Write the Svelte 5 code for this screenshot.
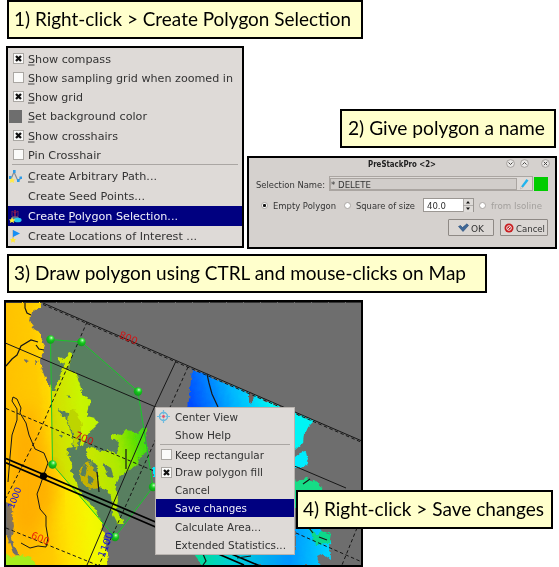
<script>
  const viewMenu = [
    { text: 'Show compass', w: 83, u: 0, icon: 'on', h: 19 },
    { text: 'Show sampling grid when zoomed in', w: 205, u: 0, icon: 'off', h: 19 },
    { text: 'Show grid', w: 55, u: 0, icon: 'on', h: 19 },
    { text: 'Set background color', w: 119, u: 0, icon: 'swatch', h: 20 },
    { text: 'Show crosshairs', w: 90, u: 0, icon: 'on', h: 19 },
    { text: 'Pin Crosshair', w: 73, u: -1, icon: 'off', h: 19 },
    { sep: true },
    { text: 'Create Arbitrary Path...', w: 129, u: 0, icon: 'path', h: 20 },
    { text: 'Create Seed Points...', w: 117, u: -1, icon: '', h: 20 },
    { text: 'Create Polygon Selection...', w: 150, u: 7, icon: 'polygon', h: 20, active: true },
    { text: 'Create Locations of Interest ...', w: 169, u: -1, icon: 'flag', h: 20 }
  ];
  const mapMenu = [
    { text: 'Center View', w: 63, icon: 'target', h: 19 },
    { text: 'Show Help', w: 56, icon: '', h: 18 },
    { sep: true },
    { text: 'Keep rectangular', w: 89, icon: 'off', h: 17 },
    { text: 'Draw polygon fill', w: 88, icon: 'on', h: 18 },
    { text: 'Cancel', w: 35, icon: '', h: 18 },
    { text: 'Save changes', w: 72, icon: '', h: 18, active: true },
    { text: 'Calculate Area...', w: 86, icon: '', h: 19 },
    { text: 'Extended Statistics...', w: 111, icon: '', h: 17 }
  ];
  const nodes = [[50.5, 339.5], [81.5, 342], [138, 391.5], [153, 487], [115, 537], [52.5, 464.5]];
  const outline = nodes.map((p) => p.join(',')).join(' ');
</script>

{#snippet label(text, w, size = 11.2, u = -1)}
  <svg class="label" width={w} height="16" viewBox="0 0 {w} 16">
    <text y="12" font-size={size} textLength={w} lengthAdjust="spacingAndGlyphs">{text}</text>
    {#if u >= 0}<path d="M{u === 7 ? 41 : 0} 14h6.5" stroke="currentColor" stroke-width=".9" />{/if}
  </svg>
{/snippet}

{#snippet caption(text, w)}
  <svg class="caption-text" width={w} height="30" viewBox="0 0 {w} 30">
    <text y="22" font-size="18.6" textLength={w} lengthAdjust="spacingAndGlyphs">{text}</text>
  </svg>
{/snippet}

{#snippet icon(name)}
  <span class="icon">
    {#if name === 'on' || name === 'off'}
      <svg class="check" width="11" height="11" viewBox="0 0 11 11">
        <rect x=".5" y=".5" width="10" height="10" fill="#fbfbfa" stroke="#aaa7a3" />
        {#if name === 'on'}<path d="M3 3l5 5M8 3l-5 5" stroke="#111" stroke-width="2.3" />{/if}
      </svg>
    {:else if name === 'swatch'}
      <svg width="13" height="13" viewBox="0 0 13 13"><path d="M0 0h13v13H0z" fill="#6e6e6e" /></svg>
    {:else if name === 'path'}
      <svg width="13" height="13" viewBox="0 0 13 13">
        <path d="M2 9L5 2l4 9 3-3" fill="none" stroke="#888d91" stroke-width="1.2" />
        <path d="M4 0h2.6v3H4zM0 6h2.5v3H0zM8 9h2.6v3H8zM10.5 6.500H13V9h-2.500z" fill="#2d9be8" />
        <path d="M3 7l1 2.200 2.500.2-1.900 1.600.6 2-2.200-1-2.200 1 .6-2L0 9.400l2.200-.2z" fill="#ffe94a" />
      </svg>
    {:else if name === 'polygon'}
      <svg width="13" height="13" viewBox="0 0 13 13">
        <path d="M3 1l3 2 3-2v5L6 8 3 6z" fill="none" stroke="#702060" />
        <path d="M6 0v9" stroke="#b01944" stroke-width="1.300" /><path d="M2 8q2-3 8-1l-2 3H3z" fill="#5d6f93" />
        <ellipse cx="8.700" cy="10" rx="3.900" ry="2.300" fill="#24c8ee" />
        <path d="M3 7l1 2.200 2.500.2-1.900 1.600.6 2-2.200-1-2.200 1 .6-2L0 9.400l2.200-.2z" fill="#ffef35" />
      </svg>
    {:else if name === 'flag'}
      <svg width="13" height="13" viewBox="0 0 13 13">
        <path d="M4 0v10" stroke="#a8a8a8" /><path d="M4 0l7 3.500L4 7z" fill="#168ff4" />
        <path d="M4 7l1 2 2.200.2-1.700 1.500.5 2L4 11.600l-2 1.100.5-2L.8 9.200 3 9z" fill="#ffe936" />
      </svg>
    {:else if name === 'target'}
      <svg width="13" height="13" viewBox="0 0 13 13" fill="none">
        <circle cx="6.500" cy="6.500" r="4" stroke="#64b6dc" stroke-width="1.400" />
        <path d="M6.500 0v4.500M6.500 8.500V13M0 6.500h4.500M8.500 6.500H13" stroke="#6ebce0" stroke-width="1.200" />
        <circle cx="6.500" cy="6.500" r="1.400" fill="#e0506a" />
      </svg>
    {/if}
  </span>
{/snippet}

{#snippet menu(items)}
  {#each items as item}
    {#if item.sep}
      <hr />
    {:else}
      <div class="item" class:active={item.active} style="height:{item.h}px">
        {@render icon(item.icon)}
        {@render label(item.text, item.w, 11.2, item.u)}
      </div>
    {/if}
  {/each}
{/snippet}

{#snippet bubble(d)}
  <svg width="9" height="9" viewBox="0 0 9 9" fill="none">
    <circle cx="4.500" cy="4.500" r="3.900" fill="#e9e7e5" stroke="#97928f" stroke-width=".8" />
    <path {d} stroke="#494644" />
  </svg>
{/snippet}

<main>
  <div class="caption c1">{@render caption('1) Right-click > Create Polygon Selection', 337)}</div>
  <section class="row">
    <div class="menu view">{@render menu(viewMenu)}</div>
    <div class="right">
      <div class="caption c2">{@render caption('2) Give polygon a name', 197)}</div>
      <div class="dialog">
        <header>
          <b>{@render label('PreStackPro <2>', 68, 8.5)}</b>
          <span class="controls">
            {@render bubble('M2.500 3.500l2 2 2-2')}
            {@render bubble('M2.500 5.500l2-2 2 2')}
            {@render bubble('M2.800 2.800l3.400 3.400M6.200 2.800L2.800 6.200')}
          </span>
        </header>
        <div class="name">
          {@render label('Selection Name:', 69, 9)}
          <div class="field"><div class="value">{@render label('* DELETE', 40, 9)}</div>
            <svg width="15" height="13" viewBox="0 0 15 13">
              <path d="M4 9.500L9.500 2l2 1.600L6 10.500z" fill="#20b4ee" /><path d="M4 9.500L3.500 12 6 10.500z" fill="#eee" stroke="#777" stroke-width=".3" />
            </svg>
          </div>
          <i class="green"></i>
        </div>
        <div class="options">
          <i class="radio sel"></i>{@render label('Empty Polygon', 63, 9)}
          <i class="radio second"></i>{@render label('Square of size', 59, 9)}
          <div class="spin">{@render label('40.0', 19, 9)}
            <svg width="10" height="13" viewBox="0 0 10 13"><path d="M0 0h10v13H0z" fill="#dedbd8" /><path d="M0 6.500h10M.5 0v13" stroke="#a5a19e" stroke-width=".8" /><path d="M3 4.500l2-2.500 2 2.500zM3 8.500l2 2.500 2-2.500z" fill="#111" /></svg>
          </div>
          <i class="radio third"></i><span class="muted">{@render label('from Isoline', 51, 9)}</span>
        </div>
        <footer>
          <button class="ok"><svg width="11" height="9" viewBox="0 0 11 9"><path d="M.5 3.500l2-1 2 2L9 .8l1.500 1.700L5 8.500z" fill="#3f6797" stroke="#244c79" stroke-width=".6" /></svg>{@render label('OK', 13, 9)}</button>
          <button class="cancel"><svg width="10" height="10" viewBox="0 0 10 10"><circle cx="5" cy="5" r="4.500" fill="#c91d20" /><circle cx="5" cy="5" r="2.300" fill="none" stroke="#eee" /><path d="M3.500 6.500l3-3" stroke="#eee" /></svg>{@render label('Cancel', 29, 9)}</button>
        </footer>
      </div>
    </div>
  </section>
  <div class="caption c3">{@render caption('3) Draw polygon using CTRL and mouse-clicks on Map', 452)}</div>

  <section class="map">
    <svg class="chart" width="355" height="263" viewBox="6 302 355 263">
      <defs>
        <linearGradient id="warm" gradientUnits="userSpaceOnUse" x1="6" y1="400" x2="98" y2="392">
          <stop offset="0" stop-color="#ffc000" /><stop offset=".35" stop-color="#ffca00" /><stop offset=".55" stop-color="#ffe400" /><stop offset=".8" stop-color="#f4f800" /><stop offset="1" stop-color="#e6f800" />
        </linearGradient>
        <linearGradient id="isle" gradientUnits="userSpaceOnUse" x1="90" y1="460" x2="143" y2="450">
          <stop offset="0" stop-color="#f4ea00" /><stop offset=".5" stop-color="#d2ec00" /><stop offset="1" stop-color="#58e008" />
        </linearGradient>
        <linearGradient id="cold" gradientUnits="userSpaceOnUse" x1="184" y1="405" x2="265" y2="382">
          <stop offset="0" stop-color="#003dff" /><stop offset=".2" stop-color="#0064ff" /><stop offset=".58" stop-color="#00b4ff" /><stop offset="1" stop-color="#00f5f5" />
        </linearGradient>
        <linearGradient id="low" x1="0" x2="1"><stop offset="0" stop-color="#00df8d" /><stop offset=".3" stop-color="#00cfd8" /><stop offset=".7" stop-color="#0595ff" /><stop offset="1" stop-color="#00d8ff" /></linearGradient>
        <radialGradient id="node" cx=".6" cy=".3" r=".7"><stop offset="0" stop-color="#d8ffd8" /><stop offset=".25" stop-color="#4ee24e" /><stop offset=".5" stop-color="#11c41b" /><stop offset="1" stop-color="#109b18" /></radialGradient>
        <filter id="rough" x="-5%" y="-5%" width="110%" height="110%"><feTurbulence type="fractalNoise" baseFrequency=".22" numOctaves="2" seed="4" /><feDisplacementMap in="SourceGraphic" scale="5" xChannelSelector="R" yChannelSelector="G" /></filter>
        <filter id="glow"><feGaussianBlur stdDeviation="8" /></filter>
        <clipPath id="land"><path d="M0 296h40l-4 11-7 5-4 8 3 8 8 5 1 8 3 5-3 8-2 9 4 12 6 12 5 9 1 60 10 3 14 19 8 20 6 25 6 35H0z" /></clipPath>
      </defs>
      <path d="M0 295h370v275H0z" fill="#6e6e6e" />
      <polygon points={outline} fill="#669d4b" fill-opacity=".4" />
      <g filter="url(#rough)">
        <path d="M0 296h44l-4 11-8 5-2 8 3 8 8 5 1 8 3 5-3 8-2 9 4 12 6 12 5 5 4-14 3-10 3-4-8-4 1-3 7 2 4-6 3 1-3 8-1 8 7 2 5 13 3 10 8 5-2 9-2 7 8 2 4 5-5 5-6 5-4 14-4-1 1-14-6-10-7-9-4-2 2 9 4 11 4 9-3 9 4 11-4 11 5 10 4 12 5 6 10 10 5 10 4 15 3 18 3 30H0z" fill="url(#warm)" />
        <path d="M69 409l7 2 6 13-2 9-3 17-4-3 1-12-7-14z" fill="#e6d800" />
        <path d="M85 451l8-5 7 6 10-2 7 4 2-13-8-3 1-5 9 2 4-5 9 1 4 3 3-6 5 1-1 14 4 8-7 3-5 10-8 7-9 5-4 9 2 16-2 8 4 7 4 7-7 0-5-10-1-17-5-7-9-3-4-8-7-7 5-8z" fill="url(#isle)" />
        <path d="M57 407l4 4 4 1 1 5-5-1zM66 448l9-1 5 14 2 10-6 6-4-11zM68 395l2 3-3 1zM91 461l5 3 3 14-7-3zM103 463l8 5 3 10-6-1zM60 434l3 2-2 2z" fill="#6b8160" />
        <path d="M25 359l5 2-4 2zM34 360l5 2-4 2z" fill="#6e6e6e" />
        <path d="M79 469l8-8 6 6 4 9 2 12-10 2-8-9z" fill="#f0b400" />
        <path d="M84 463l3 5-2 9-4-4zM89 475l5 4-2 5-4-2z" fill="#6b8160" />
        <path d="M3 501l8 3 3 22-3 13 8 17-6-3-6-17-4-2z" fill="#6e6e6e" />
        <path d="M3 551l9 7 10-4 9 4 9 13H3z" fill="#a5ee1a" />
      </g>
      <g clip-path="url(#land)" filter="url(#glow)" opacity=".45"><path d="M30 400l18 60 12 30-28 55-20-20V432z" fill="#ff9500" /></g>
      <g filter="url(#rough)">
        <path d="M192 369l122 52-5 5-5 8-1 9-8 7v20H178l7-44 3-16z" fill="url(#cold)" />
        <path d="M295 457l5-4 6-2 2 9-3 6-10 2zM153 467h5v10h-5z" fill="#00ecff" />
        <path d="M290 482l17-4 11 5 10 14v10h-38z" fill="#16dd86" />
        <path d="M191 550h105v-24h22l5 7 7 8 1 19-8-6-6 3 4 9H203z" fill="url(#low)" />
        <path d="M309 527l8 8 4-4 10 3-2 10-14 1z" fill="#08d98b" />
        <path d="M249 392l4 3-1 8-3 1z" fill="#725f5c" />
      </g>
      <polygon class="tint" points={outline} />
      <polygon points={outline} fill="none" stroke="#17c929" stroke-width="1" />
      <g fill="none" stroke="#171717" stroke-width="1">
        <path d="M43 303L362 441M6 343.300L346 488M176 361L154 408 87 565" />
        <path d="M43 304.500L362 442.500M87 322L38 435 6 498M188 367L154 443 99 565M6 408.500L154 471M6 528L97 565M296 533l66 29M357 528l-15 37" stroke-dasharray="3.500 2.500" />
        <path d="M6 458.500L155 521.700 260 566M6 462.800L155 526.700 244 565" stroke="#000" stroke-width="1.700" />
        <path d="M8 482l2-25 2-22 5-15v-11l-5-8 1-4 4 2 4 9-1 5 6 10 3 12 6 14 9 4 4 10-5 14-3 9-3 8 3 15 6 7 0 10 2 12-2 9-8-1-8 2-9-5" stroke-linejoin="round" />
        <path d="M6 366l6-7 5-4 4-9 10-6 7 2M36 345l3 4 5 1M25 303l0 5 2 5 4 2M207 374l2 9 3 11 6 13M303 484l7-5M309 528l4 5M319 537l8 3M126 449v20M97 472l2 20M203 554l3 7-3 4M237 558l14-2" stroke-width="1.200" />
        <path d="M6 302.500h355" stroke-dasharray="16 1" stroke="#333" />
      </g>
      <circle cx="43.500" cy="476" r="3.600" fill="#000" />
      {#each nodes as [cx, cy]}<circle {cx} {cy} r="4.200" fill="url(#node)" />{/each}
      <g font-size="10" text-anchor="middle" fill="#d21414">
        <text transform="translate(127 341) rotate(23)" textLength="19">800</text>
        <text transform="translate(83 441.500) rotate(23)" textLength="19">700</text>
        <text transform="translate(39 541.500) rotate(23)" fill="#ee2a08" textLength="19">600</text>
        <text transform="translate(109 546) rotate(-69)" fill="#1010e8" textLength="26">1100</text>
        <text transform="translate(17.500 499) rotate(-69)" font-size="9" fill="#1010e8" textLength="22">1000</text>
      </g>
    </svg>
    <div class="menu context">{@render menu(mapMenu)}</div>
    <div class="caption c4">{@render caption('4) Right-click > Save changes', 241)}</div>
  </section>
</main>

<style>
  :global(body) { background: #fff; }
  main { width: 559px; height: 567px; overflow: hidden; box-sizing: border-box; font-family: "DejaVu Sans", sans-serif; color: #333; }
  svg { display: block; flex: none; }
  .label { overflow: visible; fill: currentColor; }
  .caption { box-sizing: border-box; height: 39px; border: 2px solid #000; background: #ffffcc; padding: 2px 5px; color: #000; }
  .caption-text { overflow: visible; font-family: Lato, "Open Sans", sans-serif; }
  .c1 { width: 356px; margin-left: 7px; }
  .c2 { width: 216px; margin: 0 0 8px 93px; padding-left: 6px; }
  .c3 { width: 480px; margin: 5px 0 7px 7px; }
  .row { display: flex; align-items: flex-end; gap: 3px; margin: 7px 0 0 6px; height: 203px; }
  .menu { box-sizing: border-box; background: #dedad7; }
  .view { width: 238px; height: 202px; border: 2px solid #000; align-self: flex-start; padding-top: 1px; }
  .item { display: flex; align-items: center; }
  .item.active { background: #000080; color: #f0f0fa; }
  .icon { width: 14px; margin-right: 5px; display: flex; flex: none; padding-left: 1px; }
  .check { margin-left: 4px; }
  hr { border: 0; border-top: 1px solid #aaa6a3; margin: 0 4px 1px; height: 0; }
  .right { display: flex; flex-direction: column; height: 140px; }
  .dialog { box-sizing: border-box; width: 310px; height: 93px; border: 2px solid #000; background: #d5d1ce; padding: 0 7px; }
  header { display: flex; height: 10px; align-items: center; padding-left: 112px; }
  header b { color: #222; }
  .controls { display: flex; margin-left: 70px; gap: 5px; }
  .controls svg:last-child { margin-left: 7px; }
  .name { display: flex; align-items: center; margin-top: 8px; height: 15px; }
  .field { box-sizing: border-box; width: 204px; height: 15px; margin-left: 4px; border: 1px solid #aaa5a1; display: flex; align-items: center; background: #dedad7; }
  .value { box-sizing: border-box; width: 187px; height: 12px; border: 1px solid #aaa5a1; background: #d1cdca; display: flex; align-items: center; }
  .green { width: 14px; height: 14px; background: #00cd00; margin-left: 1px; }
  .options { display: flex; align-items: center; height: 14px; margin-top: 7px; padding-left: 5px; }
  .radio { box-sizing: border-box; width: 7px; height: 7px; border: 1px solid #aaa6a3; background: #fff; border-radius: 50%; flex: none; margin-right: 5px; }
  .sel { background: radial-gradient(circle, #111 0 35%, #fff 55%); }
  .second { margin-left: 8px; }
  .third { margin-left: 5px; }
  .spin { box-sizing: border-box; width: 51px; height: 14px; border: 1px solid #9b9793; background: #fff; margin-left: 8px; padding-left: 3px; display: flex; justify-content: space-between; align-items: center; }
  .muted { color: #a3a09d; }
  footer { display: flex; justify-content: flex-end; gap: 6px; margin-top: 7px; padding-right: 0; }
  button { box-sizing: border-box; height: 17px; border: 1px solid #8e8985; border-radius: 1px; background: #dad6d3; padding: 0; color: #333; font: inherit; display: flex; align-items: center; justify-content: center; gap: 2px; }
  .ok { width: 46px; }
  .cancel { width: 48px; }
  .map { position: relative; box-sizing: border-box; width: 359px; height: 267px; margin-left: 4px; border: 2px solid #000; }
  .chart { overflow: hidden; }
  .tint { fill: #d2fcff; mix-blend-mode: multiply; }
  .context { position: absolute; left: 149px; top: 105px; width: 140px; height: 148px; border: 1px solid #b9b4b0; }
  .context .icon { margin-right: 4px; }
  .context .item:nth-child(1) { margin-top: -1px; }
  .c4 { position: absolute; left: 290px; top: 188px; width: 257px; }
</style>
